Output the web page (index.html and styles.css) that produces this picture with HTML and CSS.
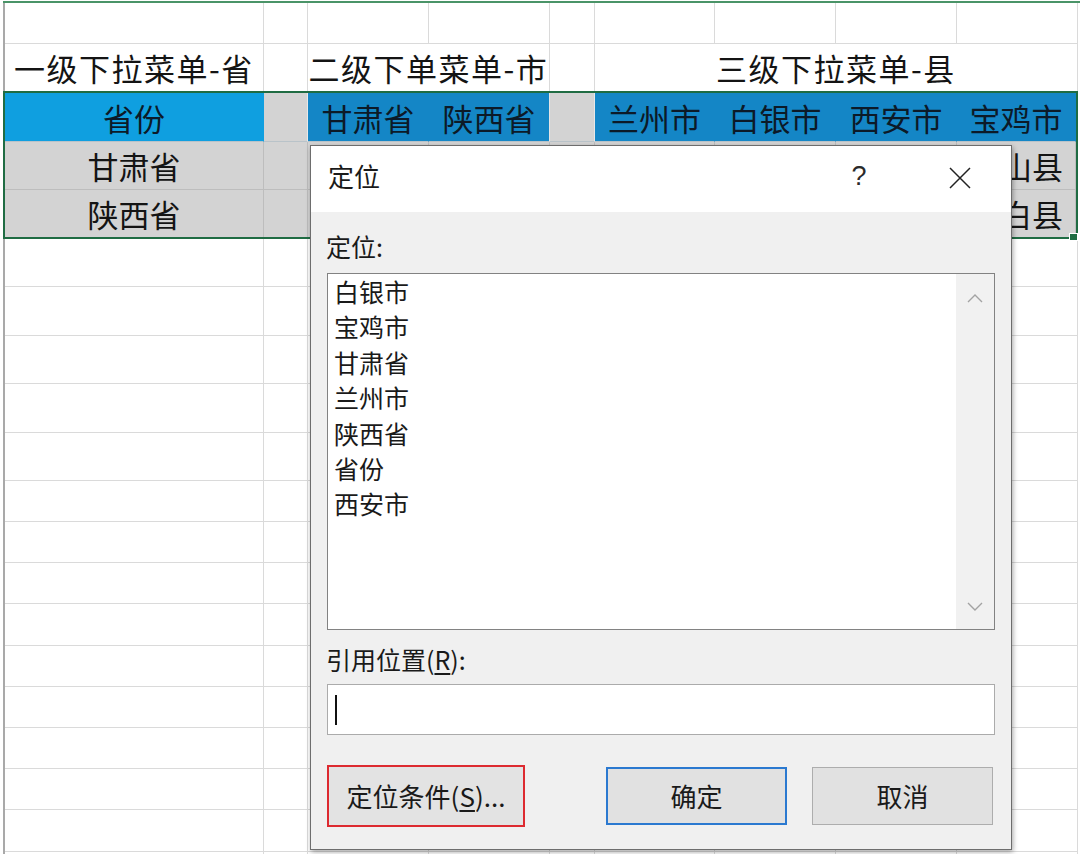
FILE: index.html
```html
<!DOCTYPE html>
<html lang="zh-CN">
<head>
<meta charset="utf-8">
<title>定位</title>
<link rel="stylesheet" href="styles.css">
</head>
<body>
<div class="page">
  <div class="sheet">
    <div class="row h41">
      <div class="c"></div><div class="c"></div><div class="c"></div><div class="c"></div><div class="c"></div><div class="c"></div><div class="c"></div><div class="c"></div><div class="c"></div>
    </div>
    <div class="row h48 hdr">
      <div class="c">一级下拉菜单-省</div><div class="c"></div><div class="c s2">二级下单菜单-市</div><div class="c"></div><div class="c s4">三级下拉菜单-县</div>
    </div>
    <div class="sel">
      <div class="row h49 r3">
        <div class="c b1">省份</div><div class="c g"></div><div class="c b2">甘肃省</div><div class="c b2 edge">陕西省</div><div class="c g"></div><div class="c b2">兰州市</div><div class="c b2">白银市</div><div class="c b2">西安市</div><div class="c b2">宝鸡市</div>
      </div>
      <div class="row h48">
        <div class="c g">甘肃省</div><div class="c g"></div><div class="c g"></div><div class="c g"></div><div class="c g"></div><div class="c g"></div><div class="c g"></div><div class="c g"></div><div class="c g tail">山县</div>
      </div>
      <div class="row h47 last">
        <div class="c g">陕西省</div><div class="c g"></div><div class="c g"></div><div class="c g"></div><div class="c g"></div><div class="c g"></div><div class="c g"></div><div class="c g"></div><div class="c g tail">白县</div>
      </div>
      <div class="handle"></div>
    </div>
    <div class="row h49 after"><div class="c"></div><div class="c"></div><div class="c"></div><div class="c"></div><div class="c"></div><div class="c"></div><div class="c"></div><div class="c"></div><div class="c"></div></div>
    <div class="row h49"><div class="c"></div><div class="c"></div><div class="c"></div><div class="c"></div><div class="c"></div><div class="c"></div><div class="c"></div><div class="c"></div><div class="c"></div></div>
    <div class="row h48"><div class="c"></div><div class="c"></div><div class="c"></div><div class="c"></div><div class="c"></div><div class="c"></div><div class="c"></div><div class="c"></div><div class="c"></div></div>
    <div class="row h49"><div class="c"></div><div class="c"></div><div class="c"></div><div class="c"></div><div class="c"></div><div class="c"></div><div class="c"></div><div class="c"></div><div class="c"></div></div>
    <div class="row h48"><div class="c"></div><div class="c"></div><div class="c"></div><div class="c"></div><div class="c"></div><div class="c"></div><div class="c"></div><div class="c"></div><div class="c"></div></div>
    <div class="row h41"><div class="c"></div><div class="c"></div><div class="c"></div><div class="c"></div><div class="c"></div><div class="c"></div><div class="c"></div><div class="c"></div><div class="c"></div></div>
    <div class="row h41"><div class="c"></div><div class="c"></div><div class="c"></div><div class="c"></div><div class="c"></div><div class="c"></div><div class="c"></div><div class="c"></div><div class="c"></div></div>
    <div class="row h41"><div class="c"></div><div class="c"></div><div class="c"></div><div class="c"></div><div class="c"></div><div class="c"></div><div class="c"></div><div class="c"></div><div class="c"></div></div>
    <div class="row h42"><div class="c"></div><div class="c"></div><div class="c"></div><div class="c"></div><div class="c"></div><div class="c"></div><div class="c"></div><div class="c"></div><div class="c"></div></div>
    <div class="row h41"><div class="c"></div><div class="c"></div><div class="c"></div><div class="c"></div><div class="c"></div><div class="c"></div><div class="c"></div><div class="c"></div><div class="c"></div></div>
    <div class="row h41"><div class="c"></div><div class="c"></div><div class="c"></div><div class="c"></div><div class="c"></div><div class="c"></div><div class="c"></div><div class="c"></div><div class="c"></div></div>
    <div class="row h41"><div class="c"></div><div class="c"></div><div class="c"></div><div class="c"></div><div class="c"></div><div class="c"></div><div class="c"></div><div class="c"></div><div class="c"></div></div>
    <div class="row h41"><div class="c"></div><div class="c"></div><div class="c"></div><div class="c"></div><div class="c"></div><div class="c"></div><div class="c"></div><div class="c"></div><div class="c"></div></div>
    <div class="row h42"><div class="c"></div><div class="c"></div><div class="c"></div><div class="c"></div><div class="c"></div><div class="c"></div><div class="c"></div><div class="c"></div><div class="c"></div></div>
    <div class="row h41"><div class="c"></div><div class="c"></div><div class="c"></div><div class="c"></div><div class="c"></div><div class="c"></div><div class="c"></div><div class="c"></div><div class="c"></div></div>
  </div>

  <div class="dlg">
    <div class="dlg-title">
      <span class="dlg-name">定位</span>
      <span class="help">?</span>
      <svg class="close" width="22" height="22" viewBox="0 0 22 22"><path d="M1 1L21 21M21 1L1 21" stroke="#222" stroke-width="1.5" fill="none"/></svg>
    </div>
    <div class="dlg-body">
      <div class="lbl">定位:</div>
      <div class="list">
        <div class="items">
          <div class="item">白银市</div>
          <div class="item">宝鸡市</div>
          <div class="item">甘肃省</div>
          <div class="item">兰州市</div>
          <div class="item">陕西省</div>
          <div class="item">省份</div>
          <div class="item">西安市</div>
        </div>
        <div class="vscroll">
          <svg width="16" height="9" viewBox="0 0 16 9"><path d="M1 8L8 1L15 8" stroke="#a3a3a3" stroke-width="1.4" fill="none"/></svg>
          <svg width="16" height="9" viewBox="0 0 16 9"><path d="M1 1L8 8L15 1" stroke="#a3a3a3" stroke-width="1.4" fill="none"/></svg>
        </div>
      </div>
      <div class="lbl lbl2">引用位置(<u>R</u>):</div>
      <div class="field"><span class="caret"></span></div>
      <div class="btns">
        <div class="btn btn-special">定位条件(<u>S</u>)...</div>
        <div class="btn btn-ok">确定</div>
        <div class="btn btn-cancel">取消</div>
      </div>
    </div>
  </div>
</div>
</body>
</html>
```
FILE: styles.css
```css
* { box-sizing: border-box; }
html, body { margin: 0; padding: 0; }
body {
  width: 1080px;
  height: 854px;
  overflow: hidden;
  background: #ffffff;
  font-family: "Noto Sans CJK SC", "Noto Sans", sans-serif;
  color: #111111;
}
.page { position: relative; width: 1080px; height: 854px; }

/* spreadsheet */
.sheet {
  margin: 1px 0 0 3px;
  border-top: 2px solid #4a9468;
  display: flex;
  flex-direction: column;
}
.row {
  display: grid;
  grid-template-columns: 259px 44px 121px 121px 45px 120px 121px 121px 121px;
  border-left: 2px solid #a9a9a9;
  flex: none;
}
.h41 { height: 41px; }
.h42 { height: 42px; }
.h47 { height: 47px; }
.h48 { height: 48px; }
.h49 { height: 49px; }
.c {
  border-right: 1px solid #dadada;
  border-bottom: 1px solid #dadada;
  display: flex;
  align-items: center;
  justify-content: center;
  font-size: 31px;
  line-height: 1;
  white-space: nowrap;
  overflow: hidden;
  color: #141414;
}
.s2 { grid-column: span 2; }
.s4 { grid-column: span 4; }
.hdr .c { letter-spacing: 1.5px; }

/* selection block */
.sel {
  position: relative;
  width: 1075px;
  margin: -1px 0 -1px 0;
  border: 2px solid #1f6c43;
  flex: none;
}
.sel .row {
  border-left: 0;
  grid-template-columns: 259px 44px 121px 121px 45px 120px 121px 121px 119px;
}
.r3 .c { border-bottom-color: #b9c3c9; color: #0c1a28; }
.b1 { background: #0f9fe0; border-right-color: transparent; }
.b2 { background: #1486c6; border-right-color: transparent; }
.b2.edge { border-right-color: #e4e4e4; }
.g { background: #d3d3d3; border-right-color: #bdbdbd; border-bottom-color: #bdbdbd; }
.r3 .g { border-right-color: #e8e8e8; }
.tail { justify-content: flex-end; padding-right: 12px; }
.last .c { border-bottom: 0; }
.handle {
  position: absolute;
  right: -2px;
  bottom: -4px;
  width: 9px;
  height: 8px;
  background: #1f6c43;
  border: 1px solid #ffffff;
}

/* dialog */
.dlg {
  position: absolute;
  left: 310px;
  top: 144px;
  width: 702px;
  height: 705px;
  background: #f0f0f0;
  border: 1px solid #6d6d6d;
  box-shadow: 1px 2px 5px rgba(0, 0, 0, 0.35);
  display: flex;
  flex-direction: column;
  color: #1a1a1a;
}
.dlg-title {
  height: 66px;
  flex: none;
  background: #ffffff;
  display: flex;
  align-items: center;
  padding: 0 40px 6px 17px;
}
.dlg-name { font-size: 26px; line-height: 1; }
.help {
  margin-left: auto;
  width: 30px;
  margin-right: 75px;
  text-align: center;
  font-size: 27px;
  line-height: 1;
  color: #2a2a2a;
  font-family: "Liberation Sans", "DejaVu Sans", sans-serif;
}
.close { display: block; margin-top: 4px; }

.dlg-body {
  flex: 1;
  display: flex;
  flex-direction: column;
  padding: 0 16px 0 15px;
}
.lbl {
  font-size: 25px;
  line-height: 30px;
  margin-top: 19px;
  height: 30px;
}
.lbl2 { margin-top: 14px; }
.lbl u { text-underline-offset: 3px; }
.list {
  margin-top: 12px;
  height: 357px;
  background: #ffffff;
  border: 1px solid #828282;
  display: flex;
  margin-left: 1px;
}
.items {
  flex: 1;
  padding: 0 0 0 6px;
}
.item {
  font-size: 25px;
  line-height: 35.4px;
  height: 35.4px;
}
.vscroll {
  width: 38px;
  background: #f1f1f1;
  display: flex;
  flex-direction: column;
  align-items: center;
  justify-content: space-between;
  padding: 20px 0 18px;
}
.vscroll svg { display: block; }
.field {
  margin-top: 10px;
  height: 51px;
  margin-left: 1px;
  background: #ffffff;
  border: 1px solid #ababab;
  display: flex;
  align-items: center;
}
.caret {
  width: 2px;
  height: 30px;
  background: #111111;
  margin-left: 7px;
}
.btns {
  margin-top: 30px;
  height: 62px;
  display: flex;
  align-items: center;
  padding-right: 2px;
}
.btn {
  height: 58px;
  background: #e1e1e1;
  border: 1px solid #adadad;
  display: flex;
  align-items: center;
  justify-content: center;
  font-size: 26px;
  line-height: 1;
  color: #1a1a1a;
}
.btn u { text-underline-offset: 3px; }
.btn-special {
  width: 198px;
  height: 62px;
  margin-left: 1px;
  border: 2px solid #dd2a30;
  background: #e3e3e3;
}
.btn-ok {
  width: 181px;
  margin-left: auto;
  border: 2px solid #2b79d0;
}
.btn-cancel {
  width: 181px;
  margin-left: 25px;
}
```
